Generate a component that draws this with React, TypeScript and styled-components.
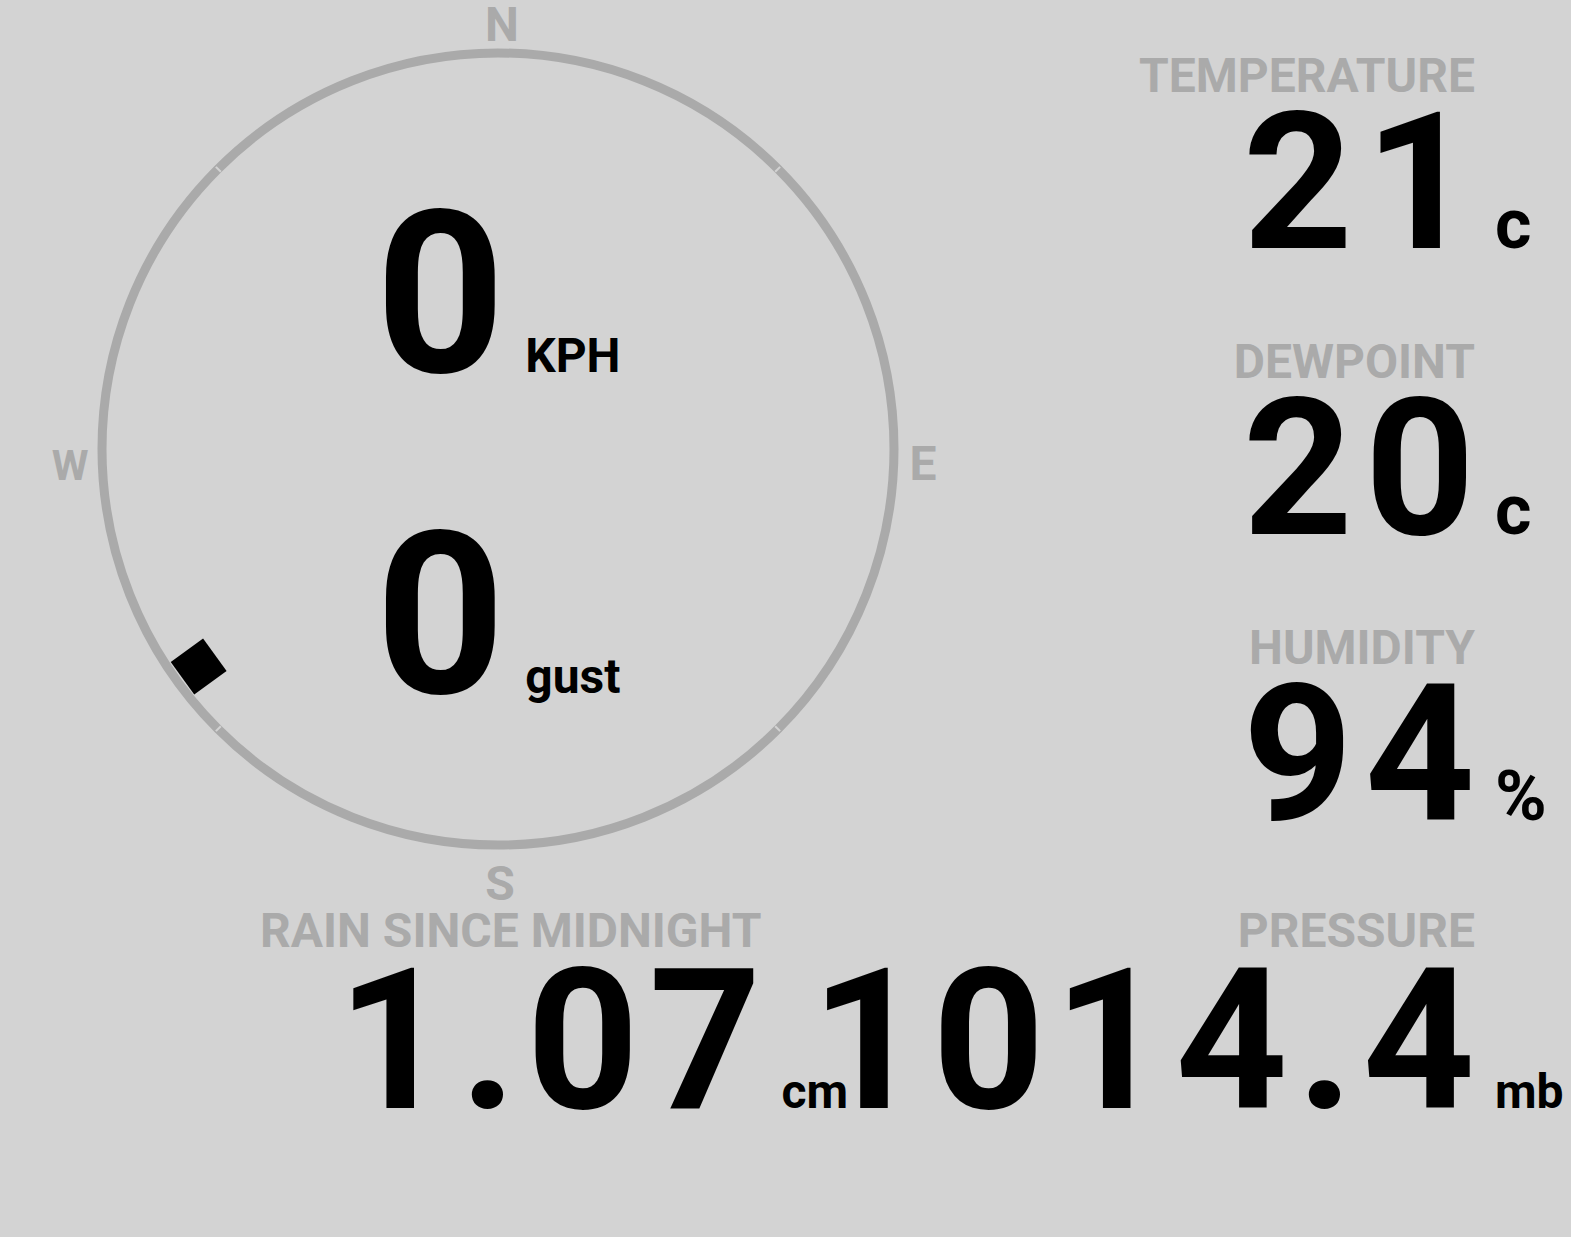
import React from 'react';
import styled, { createGlobalStyle } from 'styled-components';

const GlobalStyle = createGlobalStyle`
  html, body {
    margin: 0;
    padding: 0;
    background-color: #D3D3D3;
  }
  body {
    font-family: Roboto, "Liberation Sans", sans-serif;
  }
`;

const Page = styled.div`
  width: 1571px;
  height: 1237px;
  box-sizing: border-box;
  padding-right: 96px;
  background-color: #D3D3D3;
  overflow: hidden;
`;

const TopRow = styled.div`
  display: flex;
  justify-content: space-between;
  height: 852px;
`;

const Compass = styled.div`
  position: relative;
  width: 996px;
  height: 852px;
  display: flex;
  flex-direction: column;
  align-items: center;
  gap: 121px;
  padding-top: 195px;
  box-sizing: border-box;
`;

const Dial = styled.svg`
  position: absolute;
  top: 0;
  left: 0;
  overflow: visible;
`;

const Readout = styled.div`
  position: relative;
  display: flex;
  align-items: baseline;
  gap: 20px;
`;

const BigValue = styled.span`
  font-size: 226px;
  line-height: 200px;
  font-weight: 700;
  color: #000;
`;

const SmallUnit = styled.span`
  font-size: 48px;
  font-weight: 700;
  color: #000;
`;

const StatColumn = styled.div`
  display: flex;
  flex-direction: column;
  align-items: flex-end;
  gap: 73px;
  padding-top: 52px;
`;

const Stat = styled.div`
  display: flex;
  flex-direction: column;
  align-items: flex-end;
`;

const Label = styled.div`
  font-size: 48px;
  line-height: 48px;
  font-weight: 700;
  color: #AAAAAA;
  white-space: nowrap;
`;

const ValueRow = styled.div<{ lift?: number }>`
  display: flex;
  align-items: baseline;
  margin-top: ${p => p.lift ?? 3}px;
`;

const Number = styled.span<{ size?: number; spacing?: number }>`
  font-size: ${p => p.size ?? 192}px;
  line-height: 160px;
  font-weight: 700;
  letter-spacing: ${p => p.spacing ?? 12}px;
  margin-right: ${p => -(p.spacing ?? 12)}px;
  color: #000;
  white-space: nowrap;
`;

const Unit = styled.span<{ size?: number; indent?: number }>`
  flex: none;
  width: 0;
  text-indent: ${p => p.indent ?? 20}px;
  white-space: nowrap;
  font-size: ${p => p.size ?? 70}px;
  font-weight: 700;
  color: #000;
`;

const BottomRow = styled.div`
  display: flex;
  align-items: flex-start;
  justify-content: space-between;
  margin-top: 55px;
  padding-left: 260px;
`;

const CX = 498;
const CY = 449;
const R = 396;

const CompassDial: React.FC<{ bearing: number }> = ({ bearing }) => {
  const rad = (bearing * Math.PI) / 180;
  const mx = CX + 370 * Math.sin(rad);
  const my = CY - 370 * Math.cos(rad);
  const ticks = [45, 135, 225, 315];
  return (
    <Dial width={996} height={852}>
      <circle cx={CX} cy={CY} r={R} fill="none" stroke="#AAAAAA" strokeWidth={9} />
      {ticks.map(t => {
        const a = (t * Math.PI) / 180;
        return (
          <line
            key={t}
            x1={CX + (R - 4) * Math.sin(a)}
            y1={CY - (R - 4) * Math.cos(a)}
            x2={CX + (R + 3) * Math.sin(a)}
            y2={CY - (R + 3) * Math.cos(a)}
            stroke="#D3D3D3"
            strokeWidth={2}
          />
        );
      })}
      <g fill="#AAAAAA" fontFamily="Roboto, 'Liberation Sans', sans-serif" fontWeight={700} fontSize={48} textAnchor="middle">
        <text x={502} y={41}>N</text>
        <text x={923} y={480}>E</text>
        <text x={500} y={900}>S</text>
        <text x={70} y={480} fontSize={42}>W</text>
      </g>
      <rect
        x={mx - 20}
        y={my - 20}
        width={40}
        height={40}
        fill="#000"
        transform={`rotate(${bearing} ${mx} ${my})`}
      />
    </Dial>
  );
};

const App: React.FC = () => {
  return (
    <Page>
      <GlobalStyle />
      <TopRow>
        <Compass>
          <CompassDial bearing={234} />
          <Readout>
            <BigValue>0</BigValue>
            <SmallUnit>KPH</SmallUnit>
          </Readout>
          <Readout>
            <BigValue>0</BigValue>
            <SmallUnit>gust</SmallUnit>
          </Readout>
        </Compass>

        <StatColumn>
          <Stat>
            <Label>TEMPERATURE</Label>
            <ValueRow>
              <Number>21</Number>
              <Unit>c</Unit>
            </ValueRow>
          </Stat>
          <Stat>
            <Label>DEWPOINT</Label>
            <ValueRow>
              <Number>20</Number>
              <Unit>c</Unit>
            </ValueRow>
          </Stat>
          <Stat>
            <Label>HUMIDITY</Label>
            <ValueRow>
              <Number>94</Number>
              <Unit>%</Unit>
            </ValueRow>
          </Stat>
        </StatColumn>
      </TopRow>

      <BottomRow>
        <Stat>
          <Label>RAIN SINCE MIDNIGHT</Label>
          <ValueRow lift={6}>
            <Number size={196} spacing={10}>1.07</Number>
            <Unit size={48} indent={20}>cm</Unit>
          </ValueRow>
        </Stat>
        <Stat>
          <Label>PRESSURE</Label>
          <ValueRow lift={6}>
            <Number size={196} spacing={9}>1014.4</Number>
            <Unit size={48} indent={20}>mb</Unit>
          </ValueRow>
        </Stat>
      </BottomRow>
    </Page>
  );
};

export default App;
